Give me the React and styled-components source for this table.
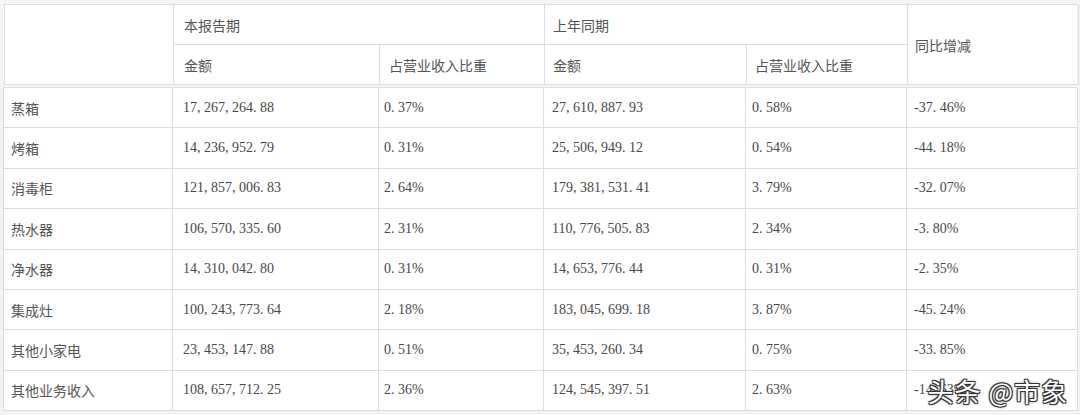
import React from "react";
import styled, { createGlobalStyle } from "styled-components";

const GlobalStyle = createGlobalStyle`
  html, body {
    margin: 0;
    padding: 0;
    background: #f4f4f4;
  }
  body {
    font-family: "Liberation Serif", "Noto Sans CJK SC", serif;
  }
`;

const COLS = "169px 206px 165px 202px 161px 171px";

const Page = styled.div`
  position: relative;
  width: 1080px;
  height: 415px;
  padding: 4px 3px 0 3px;
  box-sizing: border-box;
  overflow: hidden;
`;

const HeaderGrid = styled.div`
  display: grid;
  grid-template-columns: ${COLS};
  grid-template-rows: 40px 40px;
  margin-left: 1px;
  width: 1073px;
  background: #fff;
  border-top: 1px solid #dedede;
  border-left: 1px solid #dedede;
  box-sizing: border-box;
`;

const BodyGrid = styled.div`
  display: grid;
  grid-template-columns: ${COLS};
  grid-auto-rows: 40.4px;
  margin-top: 2px;
  background: #fff;
  border-top: 1px solid #dedede;
  border-left: 1px solid #dedede;
  box-sizing: border-box;
`;

const Cell = styled.div`
  display: flex;
  align-items: center;
  padding-left: ${(p) => p.$pad || 8}px;
  box-sizing: border-box;
  border-right: 1px solid #dedede;
  border-bottom: 1px solid #dedede;
  font-size: 14px;
  color: ${(p) => (p.$num ? "#474747" : "#555")};
  white-space: nowrap;
  grid-column: ${(p) => p.$col || "auto"};
  grid-row: ${(p) => p.$row || "auto"};
`;

const Watermark = styled.div`
  position: absolute;
  right: 12px;
  bottom: 10px;
  font-family: "Noto Sans CJK SC", "Noto Sans", sans-serif;
  font-size: 26px;
  line-height: 28px;
  color: #fff;
  letter-spacing: 1px;
  text-shadow: -1px -1px 0 #333, 1px -1px 0 #333, -1px 1px 0 #333,
    1px 1px 0 #333, 0 0 3px #000;
`;

const rows = [
  ["蒸箱", "17, 267, 264. 88", "0. 37%", "27, 610, 887. 93", "0. 58%", "-37. 46%"],
  ["烤箱", "14, 236, 952. 79", "0. 31%", "25, 506, 949. 12", "0. 54%", "-44. 18%"],
  ["消毒柜", "121, 857, 006. 83", "2. 64%", "179, 381, 531. 41", "3. 79%", "-32. 07%"],
  ["热水器", "106, 570, 335. 60", "2. 31%", "110, 776, 505. 83", "2. 34%", "-3. 80%"],
  ["净水器", "14, 310, 042. 80", "0. 31%", "14, 653, 776. 44", "0. 31%", "-2. 35%"],
  ["集成灶", "100, 243, 773. 64", "2. 18%", "183, 045, 699. 18", "3. 87%", "-45. 24%"],
  ["其他小家电", "23, 453, 147. 88", "0. 51%", "35, 453, 260. 34", "0. 75%", "-33. 85%"],
  ["其他业务收入", "108, 657, 712. 25", "2. 36%", "124, 545, 397. 51", "2. 63%", "-14. 63%"],
];

const pads = [7, 10, 5, 8, 6, 7];

export default function App() {
  return (
    <>
      <GlobalStyle />
      <Page>
        <HeaderGrid>
          <Cell $col="1" $row="1 / span 2" />
          <Cell $col="2 / span 2" $row="1" $pad={10}>本报告期</Cell>
          <Cell $col="4 / span 2" $row="1">上年同期</Cell>
          <Cell $col="6" $row="1 / span 2" $pad={7}>同比增减</Cell>
          <Cell $col="2" $row="2" $pad={10}>金额</Cell>
          <Cell $col="3" $row="2" $pad={9}>占营业收入比重</Cell>
          <Cell $col="4" $row="2">金额</Cell>
          <Cell $col="5" $row="2">占营业收入比重</Cell>
        </HeaderGrid>
        <BodyGrid>
          {rows.map((r) =>
            r.map((v, i) => (
              <Cell key={r[0] + i} $num={i > 0} $pad={pads[i]}>
                {v}
              </Cell>
            ))
          )}
        </BodyGrid>
        <Watermark>头条 @市象</Watermark>
      </Page>
    </>
  );
}
